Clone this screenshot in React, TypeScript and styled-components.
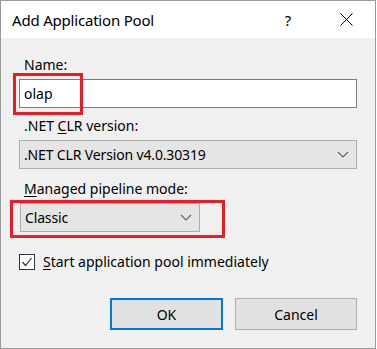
import React from "react";
import styled, { createGlobalStyle } from "styled-components";

const Global = createGlobalStyle`
  html, body { margin: 0; padding: 0; background: #ffffff; }
  body { font-family: "Noto Sans", "DejaVu Sans", sans-serif; }
`;

const FONT = `"Noto Sans", "DejaVu Sans", sans-serif`;

const Dialog = styled.div`
  width: 376px;
  height: 349px;
  box-sizing: border-box;
  border: 1px solid #9a9a9a;
  display: flex;
  flex-direction: column;
  background: #f0f0f0;
  font-family: ${FONT};
  color: #000;
`;

const TitleBar = styled.div`
  height: 37px;
  background: #ffffff;
  display: flex;
  align-items: center;
  padding-left: 11px;
  flex-shrink: 0;
`;

const Title = styled.div`
  font-size: 15px;
  line-height: 20px;
  letter-spacing: -0.2px;
  flex: 1;
`;

const CaptionButton = styled.div`
  width: 58px;
  height: 37px;
  display: flex;
  align-items: center;
  justify-content: center;
  font-size: 15px;
`;

const Body = styled.div`
  flex: 1;
  display: flex;
  flex-direction: column;
  padding: 17px 18px 0 18px;
`;

const Field = styled.div<{ $mt?: number }>`
  position: relative;
  display: flex;
  flex-direction: column;
  gap: 4px;
  margin-top: ${(p) => p.$mt ?? 0}px;
`;

const Label = styled.div`
  font-size: 14px;
  line-height: 20px;
  padding-left: 5px;
  white-space: nowrap;
`;

const U = styled.span`
  text-decoration: underline;
  text-underline-offset: 2px;
`;

const TextBox = styled.div`
  height: 29px;
  box-sizing: border-box;
  border: 1px solid #7a7a7a;
  background: #ffffff;
  display: flex;
  align-items: center;
  padding-left: 4px;
  font-size: 14px;
`;

const Combo = styled.div<{ $w?: number; $ml?: number }>`
  height: 29px;
  box-sizing: border-box;
  border: 1px solid #adadad;
  background: #e5e5e5;
  display: flex;
  align-items: center;
  padding: 0 5px 0 4px;
  font-size: 14px;
  width: ${(p) => (p.$w ? `${p.$w}px` : "auto")};
  margin-left: ${(p) => p.$ml ?? 0}px;
`;

const ComboText = styled.span`
  flex: 1;
  white-space: nowrap;
  letter-spacing: -0.15px;
`;

const Highlight = styled.div<{ $top: number; $left: number; $w: number; $h: number }>`
  position: absolute;
  top: ${(p) => p.$top}px;
  left: ${(p) => p.$left}px;
  width: ${(p) => p.$w}px;
  height: ${(p) => p.$h}px;
  box-sizing: border-box;
  border: 3px solid #ed1c24;
  pointer-events: none;
`;

const CheckRow = styled.div`
  display: flex;
  align-items: center;
  gap: 8px;
  margin-top: 20px;
  font-size: 14px;
  line-height: 20px;
`;

const CheckBox = styled.div`
  width: 16px;
  height: 16px;
  box-sizing: border-box;
  border: 1px solid #333333;
  background: #ffffff;
  display: flex;
  align-items: center;
  justify-content: center;
`;

const ButtonRow = styled.div`
  display: flex;
  justify-content: flex-end;
  gap: 12px;
  margin-top: 26px;
`;

const Button = styled.div<{ $w: number; $default?: boolean }>`
  width: ${(p) => p.$w}px;
  height: 32px;
  box-sizing: border-box;
  background: #e1e1e1;
  border: ${(p) => (p.$default ? "2px solid #0078d7" : "1px solid #adadad")};
  display: flex;
  align-items: center;
  justify-content: center;
  font-size: 14px;
`;

const Chevron = () => (
  <svg width="14" height="7" viewBox="0 0 14 7" style={{ marginRight: 1 }}>
    <polyline points="2,1 7,6 12,1" fill="none" stroke="#606060" strokeWidth="1.1" />
  </svg>
);

const CloseIcon = () => (
  <svg width="13" height="13" viewBox="0 0 13 13">
    <path d="M0.5 0.5 L12.5 12.5 M12.5 0.5 L0.5 12.5" stroke="#000" strokeWidth="1" />
  </svg>
);

const CheckMark = () => (
  <svg width="12" height="12" viewBox="0 0 12 12">
    <polyline points="1.5,6 4.5,9.5 10.5,2" fill="none" stroke="#333" strokeWidth="1.2" />
  </svg>
);

export default function App() {
  return (
    <>
      <Global />
      <Dialog>
        <TitleBar>
          <Title>Add Application Pool</Title>
          <CaptionButton>?</CaptionButton>
          <CaptionButton>
            <CloseIcon />
          </CaptionButton>
        </TitleBar>
        <Body>
          <Field>
            <Label>Name:</Label>
            <TextBox>olap</TextBox>
            <Highlight $top={18} $left={-6} $w={70} $h={42} />
          </Field>
          <Field $mt={8}>
            <Label>
              .NET <U>C</U>LR version:
            </Label>
            <Combo>
              <ComboText>.NET CLR Version v4.0.30319</ComboText>
              <Chevron />
            </Combo>
          </Field>
          <Field $mt={10}>
            <Label>
              <U>M</U>anaged pipeline mode:
            </Label>
            <Combo $w={180} $ml={1}>
              <ComboText>Classic</ComboText>
              <Chevron />
            </Combo>
            <Highlight $top={21} $left={-9} $w={215} $h={38} />
          </Field>
          <CheckRow>
            <CheckBox>
              <CheckMark />
            </CheckBox>
            <span>
              <U>S</U>tart application pool immediately
            </span>
          </CheckRow>
          <ButtonRow>
            <Button $w={113} $default>
              OK
            </Button>
            <Button $w={122}>Cancel</Button>
          </ButtonRow>
        </Body>
      </Dialog>
    </>
  );
}
